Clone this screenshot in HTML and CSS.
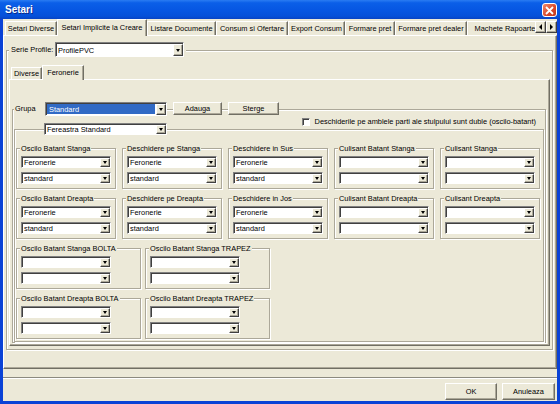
FILE: index.html
```html
<!DOCTYPE html>
<html lang="ro">
  <head>
    <meta charset="UTF-8" />
    <title>Setari</title>
    <link rel="stylesheet" href="styles.css">
  </head>
  <body>
    <div class="window">
      <div class="titlebar">
        <span class="title">Setari</span>
        <span class="close">
          <svg width="9" height="9" viewBox="0 0 9 9"><path d="M1 1L8 8M8 1L1 8" stroke="#fff" stroke-width="1.8"/></svg>
        </span>
      </div>

      <div class="client">
        <div class="tabstrip">
          <div class="tabs">
            <span class="tab w52">Setari Diverse</span>
            <span class="tab on w90">Setari Implicite la Creare</span>
            <span class="tab w69">Listare Documente</span>
            <span class="tab w72">Consum si Ofertare</span>
            <span class="tab w57">Export Consum</span>
            <span class="tab w50">Formare pret</span>
            <span class="tab w72">Formare pret dealer</span>
            <span class="tab w76">Machete Rapoarte</span>
          </div>
          <div class="scroller">
            <span class="arrow left"></span>
            <span class="arrow right"></span>
          </div>
        </div>

        <div class="page">
          <div class="grp serie">
            <div class="head serie-head">
              <span class="lbl serie-lbl">Serie Profile:</span>
              <div class="combo c15 w129"><span class="val">ProfilePVC</span><span class="drop"></span></div>
            </div>

            <div class="subtabs">
              <span class="tab w31">Diverse</span>
              <span class="tab on w42">Feronerie</span>
            </div>

            <div class="subpage">
              <div class="grp grupa">
                <div class="grupa-head">
                  <span class="lbl grupa-lbl">Grupa</span>
                  <div class="combo c14 w122"><span class="val sel">Standard</span><span class="drop"></span></div>
                  <span class="btn small w49">Adauga</span>
                  <span class="btn small w51">Sterge</span>
                </div>

                <div class="check-row">
                  <span class="checkbox"></span>
                  <span>Deschiderile pe amblele parti ale stulpului sunt duble (oscilo-batant)</span>
                </div>

                <div class="grp fereastra">
                  <div class="fereastra-head">
                    <div class="combo c12 w123"><span class="val">Fereastra Standard</span><span class="drop"></span></div>
                  </div>

                  <div class="grid5">
                    <div class="grp box">
                      <div class="head"><span class="lbl">Oscilo Batant Stanga</span></div>
                      <div class="combo c12"><span class="val">Feronerie</span><span class="drop"></span></div>
                      <div class="combo c12"><span class="val">standard</span><span class="drop"></span></div>
                    </div>
                    <div class="grp box">
                      <div class="head"><span class="lbl">Deschidere pe Stanga</span></div>
                      <div class="combo c12"><span class="val">Feronerie</span><span class="drop"></span></div>
                      <div class="combo c12"><span class="val">standard</span><span class="drop"></span></div>
                    </div>
                    <div class="grp box">
                      <div class="head"><span class="lbl">Deschidere in Sus</span></div>
                      <div class="combo c12"><span class="val">Feronerie</span><span class="drop"></span></div>
                      <div class="combo c12"><span class="val">standard</span><span class="drop"></span></div>
                    </div>
                    <div class="grp box">
                      <div class="head"><span class="lbl">Culisant Batant Stanga</span></div>
                      <div class="combo c12"><span class="val"></span><span class="drop"></span></div>
                      <div class="combo c12"><span class="val"></span><span class="drop"></span></div>
                    </div>
                    <div class="grp box">
                      <div class="head"><span class="lbl">Culisant Stanga</span></div>
                      <div class="combo c12"><span class="val"></span><span class="drop"></span></div>
                      <div class="combo c12"><span class="val"></span><span class="drop"></span></div>
                    </div>

                    <div class="grp box">
                      <div class="head"><span class="lbl">Oscilo Batant Dreapta</span></div>
                      <div class="combo c12"><span class="val">Feronerie</span><span class="drop"></span></div>
                      <div class="combo c12"><span class="val">standard</span><span class="drop"></span></div>
                    </div>
                    <div class="grp box">
                      <div class="head"><span class="lbl">Deschidere pe Dreapta</span></div>
                      <div class="combo c12"><span class="val">Feronerie</span><span class="drop"></span></div>
                      <div class="combo c12"><span class="val">standard</span><span class="drop"></span></div>
                    </div>
                    <div class="grp box">
                      <div class="head"><span class="lbl">Deschidere in Jos</span></div>
                      <div class="combo c12"><span class="val">Feronerie</span><span class="drop"></span></div>
                      <div class="combo c12"><span class="val">standard</span><span class="drop"></span></div>
                    </div>
                    <div class="grp box">
                      <div class="head"><span class="lbl">Culisant Batant Dreapta</span></div>
                      <div class="combo c12"><span class="val"></span><span class="drop"></span></div>
                      <div class="combo c12"><span class="val"></span><span class="drop"></span></div>
                    </div>
                    <div class="grp box">
                      <div class="head"><span class="lbl">Culisant Dreapta</span></div>
                      <div class="combo c12"><span class="val"></span><span class="drop"></span></div>
                      <div class="combo c12"><span class="val"></span><span class="drop"></span></div>
                    </div>
                  </div>

                  <div class="grid2">
                    <div class="grp box">
                      <div class="head"><span class="lbl">Oscilo Batant Stanga BOLTA</span></div>
                      <div class="combo c12 w90"><span class="val"></span><span class="drop"></span></div>
                      <div class="combo c12 w90"><span class="val"></span><span class="drop"></span></div>
                    </div>
                    <div class="grp box">
                      <div class="head"><span class="lbl">Oscilo Batant Stanga TRAPEZ</span></div>
                      <div class="combo c12 w90"><span class="val"></span><span class="drop"></span></div>
                      <div class="combo c12 w90"><span class="val"></span><span class="drop"></span></div>
                    </div>
                    <div class="grp box">
                      <div class="head"><span class="lbl">Oscilo Batant Dreapta BOLTA</span></div>
                      <div class="combo c12 w90"><span class="val"></span><span class="drop"></span></div>
                      <div class="combo c12 w90"><span class="val"></span><span class="drop"></span></div>
                    </div>
                    <div class="grp box">
                      <div class="head"><span class="lbl">Oscilo Batant Dreapta TRAPEZ</span></div>
                      <div class="combo c12 w90"><span class="val"></span><span class="drop"></span></div>
                      <div class="combo c12 w90"><span class="val"></span><span class="drop"></span></div>
                    </div>
                  </div>
                </div>
              </div>
            </div>
          </div>
        </div>

        <div class="separator"></div>

        <div class="actions">
          <span class="btn w52">OK</span>
          <span class="btn w53">Anuleaza</span>
        </div>
      </div>
    </div>
  </body>
</html>
```

FILE: styles.css
```css
* {
  box-sizing: border-box;
}
body {
  margin: 0;
  font-family: "Liberation Sans", Arial, sans-serif;
  font-size: 7.4px;
  color: #000;
}
.window {
  width: 560px;
  height: 404px;
  background: #0a42d6;
  display: flex;
  flex-direction: column;
  overflow: hidden;
}

/* title bar */
.titlebar {
  height: 19px;
  flex: none;
  display: flex;
  align-items: center;
  padding-left: 5px;
  background: linear-gradient(#2a7cf2 0%, #0b5fe8 15%, #0656e2 55%, #0550d9 85%, #0843c4 100%);
  color: #fff;
  font-size: 10px;
  font-weight: bold;
}
.title {
  text-shadow: 1px 1px 0 #0b2a8a;
}
.close {
  margin: 3px 3px 0 auto;
  align-self: flex-start;
  width: 15px;
  height: 14px;
  border: 1px solid #fff;
  border-radius: 3px;
  background: linear-gradient(135deg, #f08a6c, #d8482a 60%, #c0381c);
  display: flex;
  align-items: center;
  justify-content: center;
}

.client {
  flex: 1;
  margin: 0 3px 3px;
  background: #ece9d8;
  display: flex;
  flex-direction: column;
}

/* tabs */
.tabstrip {
  height: 16px;
  flex: none;
  display: flex;
  align-items: flex-end;
}
.tabs {
  flex: 1;
  height: 17px;
  margin-bottom: -1px;
  padding-left: 2px;
  display: flex;
  align-items: flex-end;
  overflow: hidden;
  position: relative;
  z-index: 1;
}
.tab {
  flex: none;
  height: 14px;
  margin-bottom: 1px;
  display: flex;
  align-items: center;
  justify-content: center;
  white-space: nowrap;
  background: #ece9d8;
  border-top: 1px solid #fff;
  border-left: 1px solid #fff;
  border-right: 1px solid #716f64;
  box-shadow: inset -1px 0 0 #aca899;
}
.tab.on {
  height: 17px;
  margin-bottom: 0;
  padding-bottom: 2px;
  position: relative;
  z-index: 1;
}
.scroller {
  flex: none;
  align-self: flex-start;
  margin-top: 2px;
  display: flex;
}
.arrow {
  width: 11px;
  height: 12px;
  background: #ece9d8;
  border: 1px solid;
  border-color: #fff #404040 #404040 #fff;
  box-shadow: inset -1px -1px 0 #aca899;
  display: flex;
  align-items: center;
  justify-content: center;
}
.arrow::after {
  content: "";
  border-style: solid;
}
.arrow.left::after {
  border-width: 3px 3px 3px 0;
  border-color: transparent #000 transparent transparent;
}
.arrow.right::after {
  border-width: 3px 0 3px 3px;
  border-color: transparent transparent transparent #000;
}

.page {
  height: 334px;
  flex: none;
  border-top: 1px solid #fff;
  border-left: 1px solid #fff;
  border-right: 1px solid #716f64;
  border-bottom: 1px solid #716f64;
  box-shadow: inset -1px -1px 0 #aca899;
  padding: 0 3px 0 2px;
}

/* group boxes */
.grp {
  border: 1px solid #aca899;
  box-shadow: inset 1px 1px 0 #fff, 1px 1px 0 #fff;
  display: flex;
  flex-direction: column;
}
.head {
  align-self: flex-start;
  display: flex;
  align-items: center;
}
.lbl {
  background: #ece9d8;
  padding: 0 1px;
  white-space: nowrap;
}

.serie {
  margin-top: 14px;
  height: 300px;
}
.serie-head {
  margin: -9px 0 0 2px;
  height: 15px;
  padding-right: 2px;
  background: #ece9d8;
}
.serie-lbl {
  width: 46px;
  padding-left: 2px;
}

.subtabs {
  margin: 8px 0 0 2px;
  padding-left: 2px;
  height: 14px;
  display: flex;
  align-items: flex-end;
}
.subtabs .tab {
  height: 12px;
  margin-bottom: 0;
}
.subtabs .tab.on {
  height: 15px;
  margin-bottom: -1px;
  padding-bottom: 1px;
}
.subpage {
  margin: 0 2px;
  height: 267px;
  border-top: 1px solid #fff;
  border-left: 1px solid #fff;
  border-right: 1px solid #716f64;
  border-bottom: 1px solid #716f64;
  box-shadow: inset -1px -1px 0 #aca899;
}

.grupa {
  margin: 29px 3px 0 2px;
  height: 234px;
}
.grupa-head {
  margin: -8px 0 0 1px;
  height: 14px;
  display: flex;
  align-items: flex-start;
}
.grupa-lbl {
  width: 31px;
  height: 14px;
  line-height: 14px;
}
.grupa-head .btn {
  margin-left: 6px;
}

.check-row {
  height: 11px;
  display: flex;
  align-items: center;
  justify-content: flex-end;
  gap: 5px;
  padding-right: 9px;
}
.checkbox {
  width: 8px;
  height: 8px;
  background: #fff;
  border: 1px solid;
  border-color: #808080 #fff #fff #808080;
  box-shadow: inset 1px 1px 0 #404040;
}

.fereastra {
  margin: 2px 1px 0;
  height: 213px;
}
.fereastra-head {
  margin-top: -7px;
  padding-left: 29px;
  display: flex;
}

.grid5 {
  margin: 13px 0 0 1px;
  display: grid;
  grid-template-columns: repeat(5, 100px);
  column-gap: 6px;
  row-gap: 9px;
}
.grid2 {
  margin: 9px 0 0 1px;
  display: grid;
  grid-template-columns: 125px 125px;
  column-gap: 4px;
  row-gap: 9px;
}
.box {
  height: 41px;
}
.box .head {
  margin: -5px 0 0 3px;
  height: 8px;
}
.box .combo {
  margin: 4px 4px 0;
}

/* combo boxes */
.combo {
  display: flex;
  background: #fff;
  border: 1px solid;
  border-color: #808080 #fff #fff #808080;
  box-shadow: inset 1px 1px 0 #404040;
  flex: none;
}
.c12 { height: 12px; }
.c14 { height: 14px; }
.c15 { height: 15px; }
.val {
  flex: 1;
  min-width: 0;
  padding: 1px 0 0 2px;
  white-space: nowrap;
  overflow: hidden;
  display: flex;
  align-items: center;
}
.val.sel {
  margin: 1px 1px 1px 1px;
  padding-top: 0;
  background: #316ac5;
  color: #fff;
}
.drop {
  width: 10px;
  flex: none;
  margin-top: 1px;
  background: #ece9d8;
  border: 1px solid;
  border-color: #fff #404040 #404040 #fff;
  box-shadow: inset -1px -1px 0 #aca899;
  display: flex;
  align-items: center;
  justify-content: center;
}
.drop::after {
  content: "";
  border-style: solid;
  border-width: 3px 2.5px 0;
  border-color: #000 transparent transparent;
}

/* buttons */
.btn {
  height: 17px;
  display: flex;
  align-items: center;
  justify-content: center;
  background: #ece9d8;
  border: 1px solid;
  border-color: #fff #716f64 #716f64 #fff;
  box-shadow: inset -1px -1px 0 #aca899;
  flex: none;
}
.btn.small {
  height: 13px;
}

.separator {
  margin-top: 8px;
  height: 2px;
  border-top: 1px solid #8c8a7f;
  border-bottom: 1px solid #fff;
}
.actions {
  margin-top: 4px;
  padding-right: 2px;
  display: flex;
  justify-content: flex-end;
  gap: 5px;
}

.w31 { width: 31px; }
.w42 { width: 42px; }
.w49 { width: 49px; }
.w50 { width: 50px; }
.w51 { width: 51px; }
.w52 { width: 52px; }
.w53 { width: 53px; }
.w57 { width: 57px; }
.w69 { width: 69px; }
.w72 { width: 72px; }
.w76 { width: 76px; }
.w90 { width: 90px; }
.w122 { width: 122px; }
.w123 { width: 123px; }
.w129 { width: 129px; }
```
